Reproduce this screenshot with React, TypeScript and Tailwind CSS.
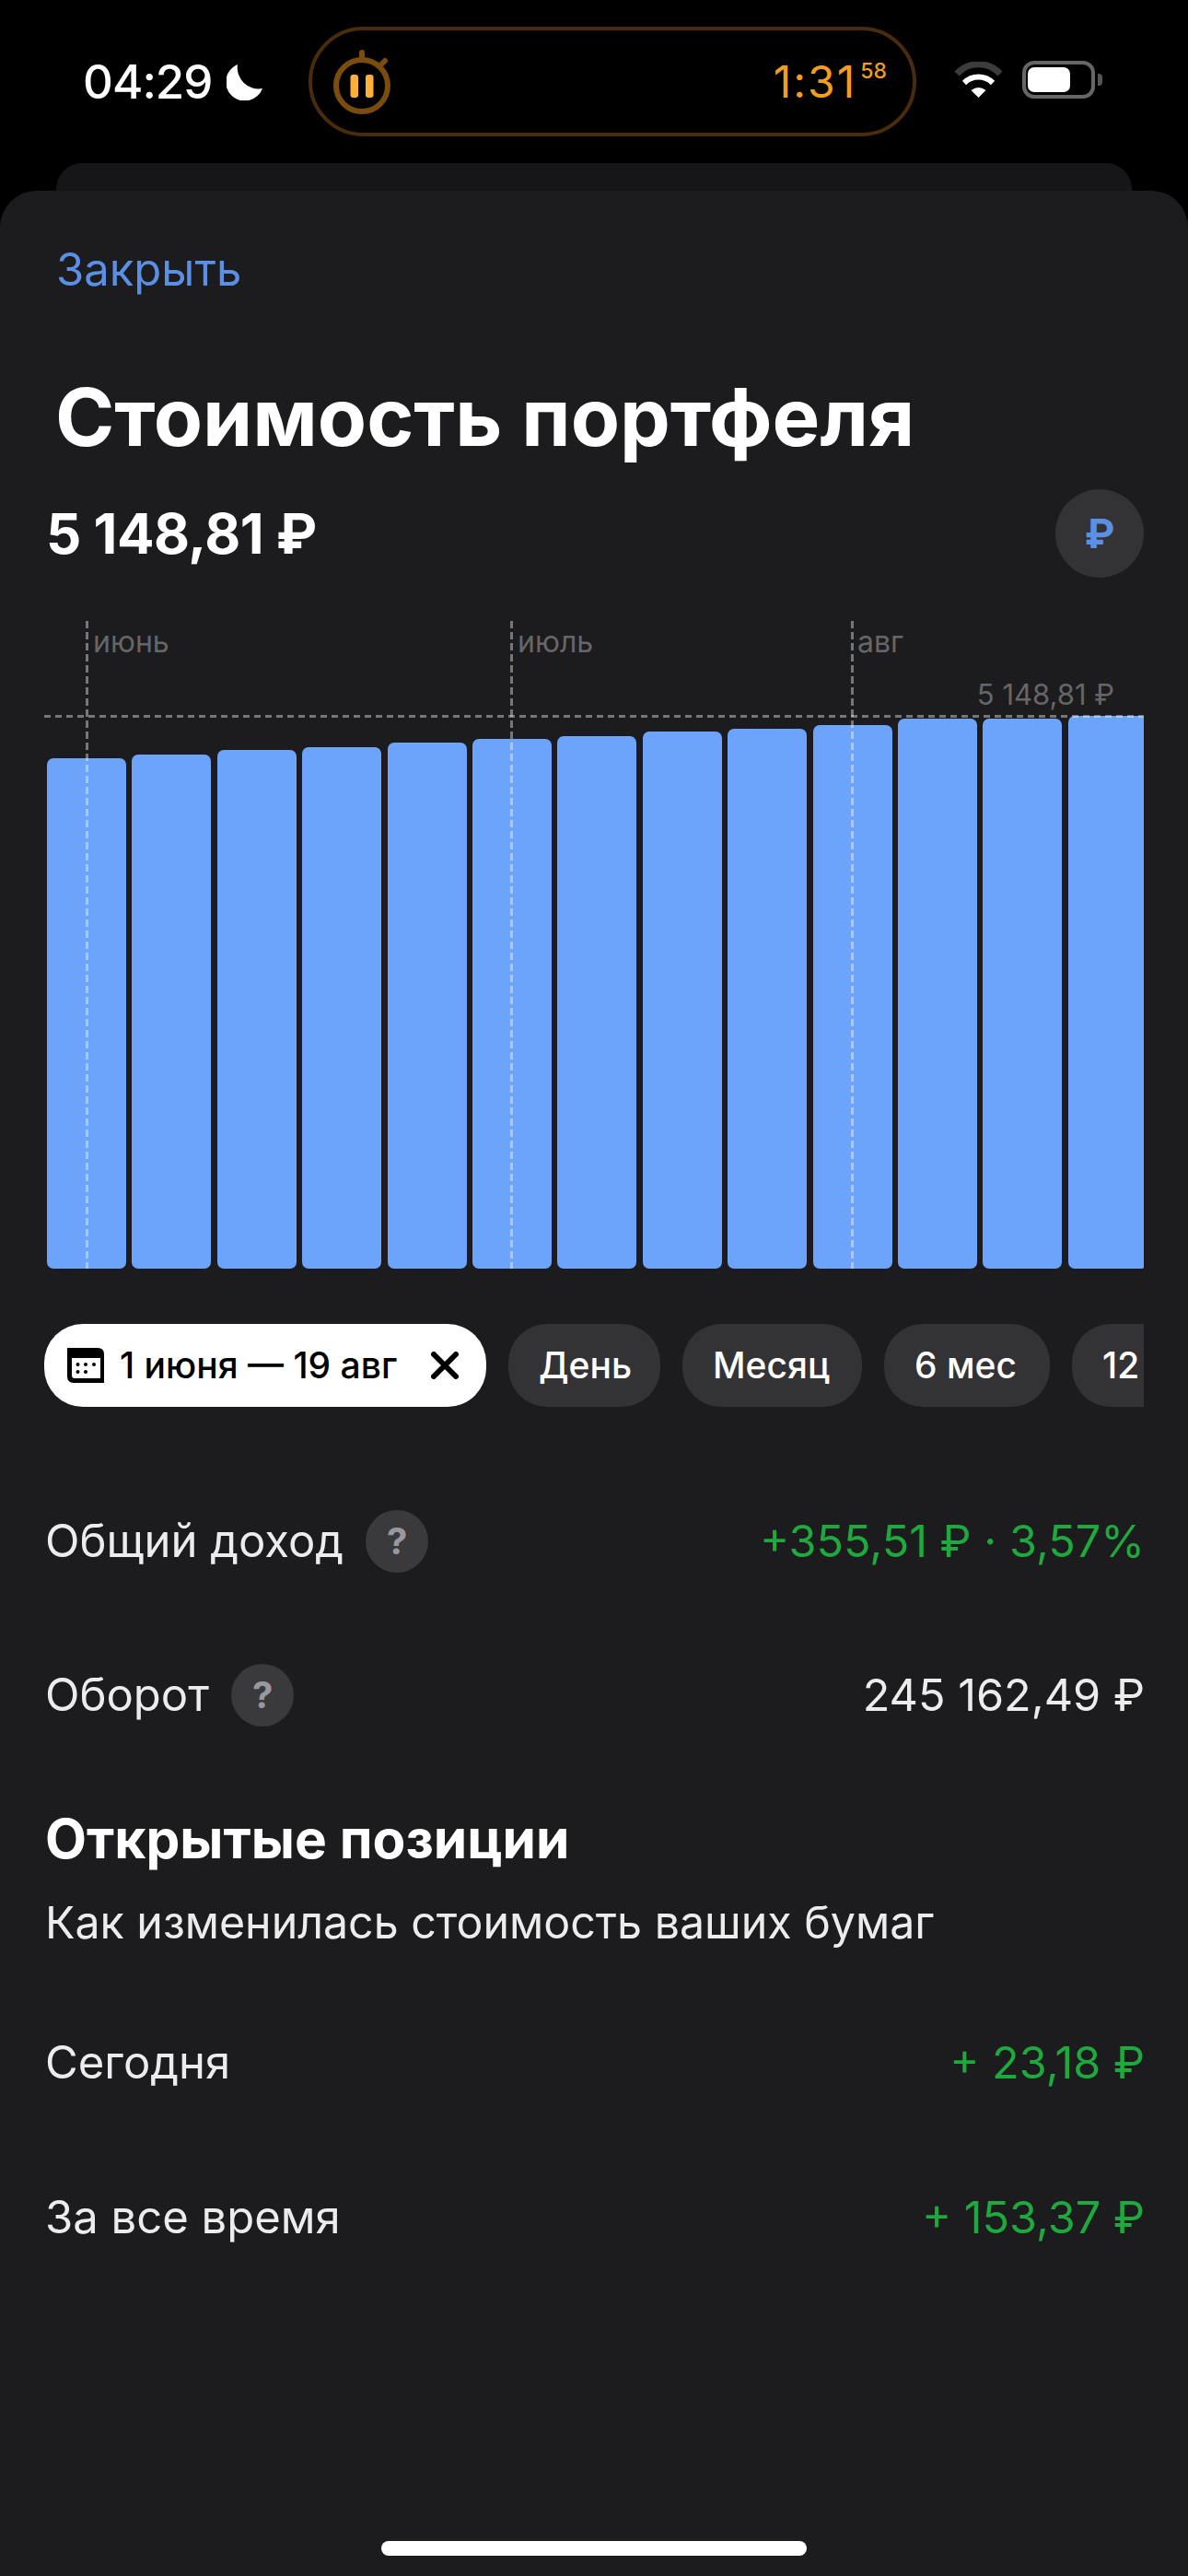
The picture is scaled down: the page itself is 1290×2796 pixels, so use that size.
const FONT = "font-['Inter','Noto_Sans',sans-serif]"

const barTops = [823, 819, 814, 811, 806, 802, 799, 794, 791, 787, 780, 780, 777]
const CHART_BOTTOM = 1377

const months = [
  { label: 'июнь', lineX: 46.5, className: 'left-[53px]' },
  { label: 'июль', lineX: 507.5, className: 'left-[514px]' },
  { label: 'авг', lineX: 877.5, className: 'left-[883px]' },
]

function StatusBar() {
  return (
    <div className="flex h-[177px] items-start">
      <div className="ml-[90px] mt-[56px] flex h-[64px] w-[195px] items-center justify-between">
        <span className="text-[51px] font-medium leading-none tracking-[-1px] text-white">04:29</span>
        <svg width="39" height="39" viewBox="0 0 39 39" className="mt-[2px]">
          <path d="M12 0A20.5 20.5 0 1 0 39 26A23 23 0 0 1 12 0Z" fill="#fff" />
        </svg>
      </div>

      {/* dynamic island */}
      <div className="ml-[50px] mt-[29px] flex h-[119px] w-[660px] items-center justify-between rounded-[60px] border-[4px] border-[#4a2c0c] pl-[23px] pr-[28px]">
        <svg width="62" height="70" viewBox="0 0 62 70">
          <line x1="31" y1="3" x2="31" y2="9" stroke="#7a4c0f" strokeWidth="6" strokeLinecap="round" />
          <line x1="52" y1="16" x2="56" y2="12" stroke="#7a4c0f" strokeWidth="6" strokeLinecap="round" />
          <circle cx="31" cy="39" r="28" fill="none" stroke="#7a4c0f" strokeWidth="6" />
          <rect x="18.5" y="27" width="8.5" height="25" rx="3" fill="#ffb038" />
          <rect x="35" y="27" width="8.5" height="25" rx="3" fill="#ffb038" />
        </svg>
        <div className="flex items-start text-[#f39c1f]">
          <span className="text-[48px] leading-none tracking-[2px]">1:31</span>
          <span className="ml-[4px] mt-[1px] text-[23px] font-medium leading-none">58</span>
        </div>
      </div>

      <svg width="53" height="39" viewBox="0 0 53 39" className="ml-[41px] mt-[67px]">
        <path d="M3 13A32 32 0 0 1 50 13" fill="none" stroke="#3c3c3c" strokeWidth="7" />
        <path d="M11 23A22 22 0 0 1 42 23" fill="none" stroke="#fff" strokeWidth="6" />
        <path d="M18.5 31Q26.5 25 34.5 31L26.5 39Z" fill="#fff" />
      </svg>

      <div className="ml-[21px] mt-[66px] flex items-center">
        <div className="flex h-[41px] w-[79px] items-center rounded-[13px] border-[4px] border-[#666] pl-[2px]">
          <div className="h-[27px] w-[46px] rounded-[7px] bg-white" />
        </div>
        <div className="ml-[3px] h-[13px] w-[5px] rounded-r-[4px] bg-[#555]" />
      </div>
    </div>
  )
}

function Chart() {
  return (
    <div className="relative ml-[48px] mt-[48px] h-[703px] w-[1194px]">
      <div className="flex h-full items-end gap-[6.4px] overflow-hidden pl-[3px]">
        {barTops.map((top, i) => (
          <div
            key={i}
            className="w-[86px] shrink-0 rounded-[7px] bg-[#6ca4fc]"
            style={{ height: CHART_BOTTOM - top }}
          />
        ))}
      </div>

      <svg className="absolute inset-0" width="1194" height="703" viewBox="0 0 1194 703">
        <line x1="0" y1="103.5" x2="1194" y2="103.5" stroke="#fff" strokeOpacity="0.4" strokeWidth="3" strokeDasharray="7 5" />
        {months.map((m) => (
          <line key={m.label} x1={m.lineX} y1="0" x2={m.lineX} y2="703" stroke="#fff" strokeOpacity="0.4" strokeWidth="3" strokeDasharray="8 4" />
        ))}
      </svg>

      {months.map((m) => (
        <span key={m.label} className={`absolute top-[3px] text-[32px] leading-[40px] text-[#666669] ${m.className}`}>
          {m.label}
        </span>
      ))}
      <span className="absolute right-[32px] top-[60px] text-[31px] leading-[40px] text-[#666669]">5 148,81 ₽</span>
    </div>
  )
}

function Pill({ label, className }: { label: string; className: string }) {
  return (
    <div className={`flex h-[90px] shrink-0 items-center rounded-[42px] bg-[#333336] pl-[33px] text-[39px] font-medium text-white ${className}`}>
      {label}
    </div>
  )
}

function Pills() {
  return (
    <div className="ml-[48px] mt-[60px] flex w-[1194px] gap-[24px] overflow-hidden">
      <div className="flex h-[90px] w-[480px] shrink-0 items-center rounded-[42px] bg-white pl-[25px] pr-[30px] text-[39px] font-medium text-black">
        <svg width="40" height="38" viewBox="0 0 40 38" className="shrink-0">
          <path d="M0 0H33Q40 0 40 7V38H7Q0 38 0 31Z" fill="#000" />
          <path d="M5 11H36V33H8Q5 33 5 30Z" fill="#fff" />
          <g fill="#000">
            <circle cx="11.5" cy="18" r="2" />
            <circle cx="20" cy="18" r="2" />
            <circle cx="29" cy="18" r="2" />
            <circle cx="11.5" cy="26" r="2" />
            <circle cx="20" cy="26" r="2" />
          </g>
        </svg>
        <span className="ml-[17px] whitespace-nowrap">1 июня — 19 авг</span>
        <svg width="30" height="30" viewBox="0 0 30 30" className="ml-auto shrink-0">
          <path d="M3 3L27 27M27 3L3 27" stroke="#000" strokeWidth="6" strokeLinecap="round" />
        </svg>
      </div>
      <Pill label="День" className="w-[165px]" />
      <Pill label="Месяц" className="w-[195px]" />
      <Pill label="6 мес" className="w-[180px]" />
      <Pill label="12 мес" className="w-[180px]" />
    </div>
  )
}

function Help() {
  return (
    <span className="ml-[24px] flex h-[68px] w-[68px] items-center justify-center rounded-full bg-[#3a3a3d] text-[40px] font-bold text-[#98989d]">
      ?
    </span>
  )
}

function Row({ label, value, help, green, className }: { label: string; value: string; help?: boolean; green?: boolean; className: string }) {
  return (
    <div className={`ml-[49px] mr-[47px] flex h-[68px] items-center justify-between text-[49px] ${className}`}>
      <div className="flex items-center text-[#ececec]">
        {label}
        {help && <Help />}
      </div>
      <span className={`text-[48.6px] ${green ? 'text-[#1fa83e]' : 'text-[#ececec]'}`}>{value}</span>
    </div>
  )
}

export default function App() {
  return (
    <div className={`h-[2796px] w-[1290px] overflow-hidden bg-black ${FONT}`}>
      <StatusBar />
      <div className="mx-[61px] h-[30px] rounded-t-[28px] bg-[#161618]" />

      <div className="h-[2589px] rounded-t-[40px] bg-[#1c1c1e] pt-[56px]">
        <div className="ml-[61px] text-[49px] leading-[60px] text-[#5b8fe3]">Закрыть</div>
        <h1 className="ml-[60px] mt-[80px] text-[87px] font-bold leading-[100px] text-white">Стоимость портфеля</h1>

        <div className="ml-[50px] mr-[48px] mt-[29px] flex h-[94px] items-center justify-between">
          <span className="text-[60px] font-bold tracking-[-0.5px] text-white">5 148,81 ₽</span>
          <span className="flex h-[96px] w-[96px] items-center justify-center rounded-full bg-[#333336] text-[44px] font-bold text-[#5b8fe3]">₽</span>
        </div>

        <Chart />
        <Pills />

        <Row label="Общий доход" value="+355,51 ₽ · 3,57%" help green className="mt-[112px]" />
        <Row label="Оборот" value="245 162,49 ₽" help className="mt-[99px]" />

        <h2 className="ml-[49px] mt-[87px] text-[58.5px] font-bold leading-[70px] text-white">Открытые позиции</h2>
        <p className="ml-[49px] mt-[26px] text-[48.3px] leading-[60px] text-[#ececec]">Как изменилась стоимость ваших бумаг</p>

        <Row label="Сегодня" value="+ 23,18 ₽" green className="mt-[88px]" />
        <Row label="За все время" value="+ 153,37 ₽" green className="mt-[100px]" />

        <div className="mx-auto mt-[317px] h-[16px] w-[462px] rounded-full bg-white" />
      </div>
    </div>
  )
}
